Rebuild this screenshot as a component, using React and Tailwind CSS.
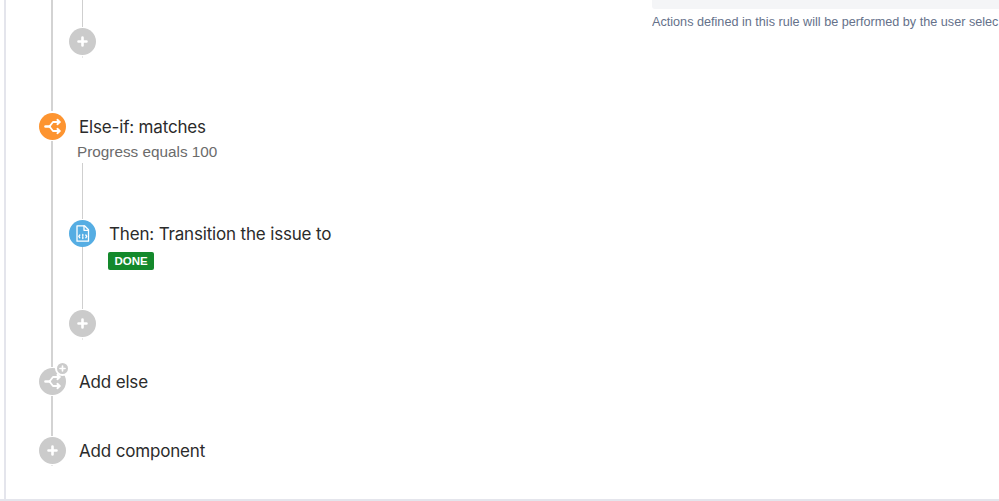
import React from "react";

const BranchIcon = ({ className = "w-[19px] h-[19px]" }) => (
  <svg className={className} viewBox="0 0 19 19" fill="none" stroke="white" strokeWidth="1.9" strokeLinecap="round" strokeLinejoin="round">
    <path d="M2.5 9.5h4" strokeWidth="2.6" />
    <path d="M6.5 9.5l3.5-4.5h6.5" />
    <path d="M6.5 9.5l3.5 4.5h6.5" />
    <path d="M14.4 2.8l2.3 2.2-2.3 2.2" />
    <path d="M14.4 11.8l2.3 2.2-2.3 2.2" />
  </svg>
);

const PlusIcon = ({ size = 11 }) => (
  <svg width={size} height={size} viewBox="0 0 11 11" stroke="white" strokeWidth="2.6" strokeLinecap="round">
    <path d="M5.5 1.5v8M1.5 5.5h8" />
  </svg>
);

const TransitionIcon = () => (
  <svg className="w-[17px] h-[19px]" viewBox="0 0 17 19" fill="none" stroke="white" strokeWidth="1.3" strokeLinejoin="round" strokeLinecap="round">
    <path d="M3 1.8h7.5l4 4v11.4H3z" />
    <path d="M10 1.8v4.5h4.5" />
    <path d="M5.8 11l-1 1.4 1 1.4M8.8 10.4v1.6M8.8 13.2v1.4M11.8 11l1 1.4-1 1.4" />
  </svg>
);

const Circle = ({ color = "bg-[#cbcbcb]", children }) => (
  <div className={`w-[27px] h-[27px] rounded-full flex items-center justify-center shrink-0 ${color}`}>
    {children}
  </div>
);

// main connector, 2px wide
const MainLine = ({ className = "" }) => (
  <div className={`ml-[12px] w-[2px] bg-[#d3d3d3] ${className}`} />
);

// connector of a nested branch, 1px wide
const SubLine = ({ className = "" }) => (
  <div className={`ml-[13px] w-px bg-[#cfcfcf] ${className}`} />
);

const Title = ({ children }) => (
  <span className="h-[27px] font-['Inter'] text-[17px] tracking-[-0.17px] leading-[29px] text-[#2b2b2b] whitespace-nowrap">{children}</span>
);

export default function App() {
  return (
    <div className="w-[999px] h-[501px] overflow-hidden bg-white">
      <div className="h-[501px] flex border-b-2 border-[#e4e5ec]">
        <div className="ml-[4px] w-[648px] pl-[33px] border-l-2 border-[#e4e5ec]">
          {/* first branch tail */}
          <div className="flex h-[113px]">
            <div className="w-[27px]">
              <MainLine className="h-[111px]" />
            </div>
            <div className="w-[27px] ml-[3px]">
              <SubLine className="h-[27px]" />
              <div className="mt-[1px]">
                <Circle><PlusIcon /></Circle>
              </div>
              <SubLine className="h-[2px] mt-[1px] opacity-50" />
            </div>
          </div>

          {/* else-if */}
          <div className="flex items-center gap-[13px] h-[27px]">
            <Circle color="bg-[#fd9430]"><BranchIcon /></Circle>
            <Title>Else-if: matches</Title>
          </div>

          <div className="flex h-[228px]">
            <div className="w-[27px] pt-[1px]">
              <MainLine className="h-[226px]" />
            </div>
            <div className="ml-[3px] w-[27px]">
              <div className="h-[23px] ml-2 font-['Liberation_Sans'] text-[15.3px] leading-[24px] whitespace-nowrap text-[#6b6b6b]">
                Progress equals 100
              </div>
              <SubLine className="h-[56px]" />
              <div className="mt-[1px] flex items-center gap-[13px]">
                <Circle color="bg-[#55ade3]"><TransitionIcon /></Circle>
                <Title>Then: Transition the issue to</Title>
              </div>
              <div className="flex h-[63px]">
                <div className="w-[27px] shrink-0">
                  <SubLine className="h-[62px]" />
                </div>
                <div className="ml-[12px] mt-[5px] pt-px w-[46px] h-[18px] shrink-0 rounded-[2px] bg-[#14892c] flex items-center justify-center font-['Liberation_Sans'] font-bold text-[11.5px] text-white">
                  DONE
                </div>
              </div>
              <Circle><PlusIcon /></Circle>
              <SubLine className="h-[2px] mt-[1px] opacity-50" />
            </div>
          </div>

          {/* add else */}
          <div className="flex items-center gap-[13px] h-[27px]">
            <div className="relative">
              <Circle><BranchIcon /></Circle>
              <div className="absolute -top-[7px] -right-[4px] w-[15px] h-[15px] rounded-full bg-[#cbcbcb] border-2 border-white flex items-center justify-center">
                <PlusIcon size={7} />
              </div>
            </div>
            <Title>Add else</Title>
          </div>

          <div className="w-[27px] pt-[1px] h-[42px]">
            <MainLine className="h-[40px]" />
          </div>

          <div className="flex items-center gap-[13px] h-[27px]">
            <Circle><PlusIcon /></Circle>
            <Title>Add component</Title>
          </div>
          <div className="w-[27px] pt-[1px]">
            <MainLine className="h-[1px] opacity-50" />
          </div>
        </div>

        {/* right panel */}
        <div className="flex-1 min-w-0 overflow-hidden">
          <div className="h-[9px] bg-[#f4f5f7] rounded-bl-[3px]" />
          <p className="mt-[5px] font-['Liberation_Sans'] text-[12.65px] leading-[16px] text-[#65718a] whitespace-nowrap">
            Actions defined in this rule will be performed by the user selec
          </p>
        </div>
      </div>
    </div>
  );
}
